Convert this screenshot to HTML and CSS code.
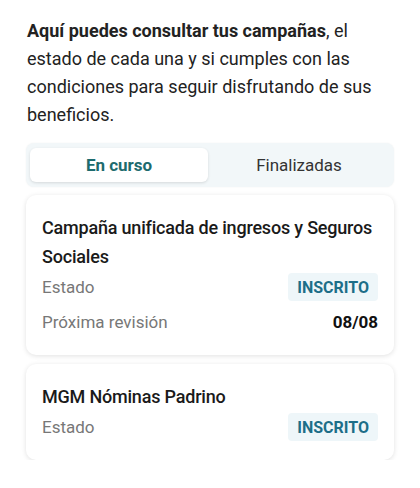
FILE: index.html
```html
<!DOCTYPE html>
<html lang="es">
<head>
<meta charset="utf-8">
<link rel="stylesheet" href="styles.css">
</head>
<body>
<main class="page">
  <p class="intro"><strong>Aquí puedes consultar tus campañas</strong>, el estado de cada una y si cumples con las condiciones para seguir disfrutando de sus beneficios.</p>
  <div class="tabs">
    <div class="tab tab-active">En curso</div>
    <div class="tab">Finalizadas</div>
  </div>
  <section class="card">
    <h2 class="card-title">Campaña unificada de ingresos y Seguros Sociales</h2>
    <div class="row">
      <span class="label">Estado</span>
      <span class="badge">INSCRITO</span>
    </div>
    <div class="row row-date">
      <span class="label">Próxima revisión</span>
      <span class="value">08/08</span>
    </div>
  </section>
  <section class="card">
    <h2 class="card-title">MGM Nóminas Padrino</h2>
    <div class="row">
      <span class="label">Estado</span>
      <span class="badge">INSCRITO</span>
    </div>
  </section>
</main>
</body>
</html>
```
FILE: styles.css
```css
* { box-sizing: border-box; }
html, body { margin: 0; padding: 0; background: #ffffff; }
body { font-family: Roboto, "Noto Sans", sans-serif; color: #1a1a1a; }
.page { padding: 17px 26px 0 26px; }
.intro {
  margin: 0 0 0 1px;
  font-size: 18px;
  line-height: 28px;
  color: #222;
}
.intro strong { font-weight: 700; }
.tabs {
  margin-top: 14px;
  display: grid;
  grid-template-columns: 178px 1fr;
  background: #f2f7f9;
  border-radius: 8px;
  padding: 5px 4px;
  height: 44px;
  box-shadow: 0 0 2px rgba(0,0,0,0.06);
}
.tab {
  display: flex;
  align-items: center;
  justify-content: center;
  font-size: 17px;
  color: #333;
}
.tab-active {
  background: #fff;
  border-radius: 6px;
  color: #1d6b6e;
  font-weight: 700;
  box-shadow: 0 1px 3px rgba(0,0,0,0.12);
}
.card {
  margin-top: 8px;
  background: #fff;
  border-radius: 10px;
  box-shadow: 0 1px 5px rgba(0,0,0,0.12);
  padding: 18px 16px 19px 16px;
}
.card + .card { margin-top: 9px; }
.card-title {
  margin: 0 0 2px 0;
  font-size: 18px;
  line-height: 29px;
  font-weight: 500;
  letter-spacing: -0.2px;
  color: #1a1a1a;
}
.row {
  display: flex;
  justify-content: space-between;
  align-items: center;
  height: 28px;
}
.row-date { margin-top: 7px; }
.label { font-size: 17px; color: #777; }
.badge {
  background: #eef6f9;
  color: #1d6e88;
  font-weight: 700;
  font-size: 16px;
  border-radius: 4px;
  padding: 0 9px;
  height: 28px;
  display: flex;
  align-items: center;
}
.value { font-size: 17px; font-weight: 700; color: #111; }
```
